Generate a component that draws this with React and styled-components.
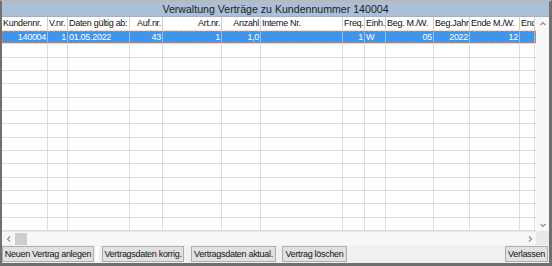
import React from "react";
import styled, { createGlobalStyle } from "styled-components";

const Global = createGlobalStyle`
  html, body { margin: 0; padding: 0; background: #f0f0f0; }
  body { font-family: "Liberation Sans", Arial, sans-serif; }
  * { box-sizing: border-box; }
`;

const COLS = [
  { key: "kd", title: "Kundennr.", w: 46, ah: "left", ad: "right" },
  { key: "vnr", title: "V.nr.", w: 20, ah: "left", ad: "right" },
  { key: "dat", title: "Daten gültig ab:", w: 62, ah: "left", ad: "left" },
  { key: "auf", title: "Auf.nr.", w: 33, ah: "right", ad: "right" },
  { key: "art", title: "Art.nr.", w: 59, ah: "right", ad: "right" },
  { key: "anz", title: "Anzahl", w: 39, ah: "right", ad: "right" },
  { key: "int", title: "Interne Nr.", w: 82, ah: "left", ad: "left" },
  { key: "frq", title: "Freq.", w: 22, ah: "left", ad: "right" },
  { key: "ein", title: "Einh.", w: 21, ah: "left", ad: "left" },
  { key: "bmw", title: "Beg. M./W.", w: 48, ah: "left", ad: "right" },
  { key: "bj", title: "Beg.Jahr", w: 36, ah: "left", ad: "right" },
  { key: "emw", title: "Ende M./W.", w: 50, ah: "left", ad: "right" },
  { key: "end", title: "Ende Jahr", w: 15, ah: "left", ad: "right" },
];
const TEMPLATE = COLS.map((c) => `${c.w}px`).join(" ");

const DATA = [
  { kd: "140004", vnr: "1", dat: "01.05.2022", auf: "43", art: "1", anz: "1,0", int: "", frq: "1", ein: "W", bmw: "05", bj: "2022", emw: "12", end: "" },
];
const ROWS = 15;

const Window = styled.div`
  width: 552px;
  height: 266px;
  display: flex;
  flex-direction: column;
  border-top: 2px solid #b9b9b9;
  border-left: 2px solid #6f6f6f;
  border-right: 3px solid #6f6f6f;
  border-bottom: 3px solid #6f6f6f;
  background: #f0f0f0;
  overflow: hidden;
`;

const TitleBar = styled.div`
  height: 15px;
  flex: none;
  background: #abbfd8;
  color: #1c1c1c;
  font-size: 10.6px;
  line-height: 15px;
  text-align: center;
  border-bottom: 1px solid #9fb2cb;
`;

const GridArea = styled.div`
  flex: none;
  display: grid;
  grid-template-columns: 1fr 13px;
  grid-template-rows: 214px 14px;
  background: #fff;
`;

const Table = styled.div`
  overflow: hidden;
  display: flex;
  flex-direction: column;
`;

const Row = styled.div`
  display: grid;
  grid-template-columns: ${TEMPLATE};
  height: ${(p) => (p.$header ? "14px" : "calc(40px / 3)")};
  flex: none;
  position: relative;
  background: ${(p) => (p.$selected ? "#3d95ec" : "#fff")};
  color: ${(p) => (p.$selected ? "#fff" : "#111")};
  border-bottom: 1px solid ${(p) => (p.$header ? "#e4e4e4" : "#dcdcdc")};
  font-size: 9px;
  letter-spacing: -0.3px;
`;

const Focus = styled.div`
  position: absolute;
  inset: 0 0 0 0;
  border: 1px dashed #f07a4a;
  pointer-events: none;
`;

const Cell = styled.div`
  overflow: hidden;
  white-space: nowrap;
  text-align: ${(p) => p.$align};
  padding: 0 1px 0 1px;
  line-height: ${(p) => (p.$header ? "13px" : "12px")};
  border-right: 1px solid
    ${(p) => (p.$header ? "#cfcfcf" : p.$selected ? "#8cc0f5" : "#dcdcdc")};
`;

const VScroll = styled.div`
  grid-row: 1;
  grid-column: 2;
  background: #f7f7f7;
  display: flex;
  flex-direction: column;
  justify-content: space-between;
  align-items: center;
`;

const HScroll = styled.div`
  grid-row: 2;
  grid-column: 1;
  background: #f7f7f7;
  display: flex;
  align-items: center;
  border-top: 1px solid #e6e6e6;
`;

const Corner = styled.div`
  grid-row: 2;
  grid-column: 2;
  background: #e9e9e9;
`;

const Arrow = styled.div`
  width: 13px;
  height: 13px;
  display: flex;
  align-items: center;
  justify-content: center;
  flex: none;
`;

const Thumb = styled.div`
  width: 12px;
  height: 12px;
  background: #cdcdcd;
  flex: none;
`;

const Spacer = styled.div`
  flex: 1;
`;

const Chevron = ({ dir }) => {
  const pts = {
    up: "1.5,5 4,2.5 6.5,5",
    down: "1.5,3 4,5.5 6.5,3",
    left: "5,1.5 2.5,4 5,6.5",
    right: "3,1.5 5.5,4 3,6.5",
  }[dir];
  return (
    <svg width="8" height="8" viewBox="0 0 8 8">
      <polyline points={pts} fill="none" stroke="#8a8a8a" strokeWidth="1.1" />
    </svg>
  );
};

const ButtonBar = styled.div`
  flex: 1;
  display: flex;
  align-items: center;
  background: #f0f0f0;
  padding: 0 1px 1px 0;
`;

const Button = styled.button`
  height: 16px;
  padding: 0;
  margin-left: ${(p) => p.$gap || 0}px;
  width: ${(p) => p.$w}px;
  background: #e1e1e1;
  border: 1px solid #adadad;
  font-family: "Liberation Sans", Arial, sans-serif;
  font-size: 9px;
  letter-spacing: -0.3px;
  color: #111;
  white-space: nowrap;
  overflow: hidden;
  flex: none;
`;

const Divider = styled.div`
  width: 4px;
  height: 16px;
  margin-left: 1px;
  background: #fdfdfd;
  flex: none;
`;

export default function App() {
  const rows = Array.from({ length: ROWS }, (_, i) => DATA[i] || null);
  return (
    <>
      <Global />
      <Window>
        <TitleBar>Verwaltung Verträge zu Kundennummer 140004</TitleBar>
        <GridArea>
          <Table>
            <Row $header>
              {COLS.map((c) => (
                <Cell key={c.key} $header $align={c.ah}>
                  {c.title}
                </Cell>
              ))}
            </Row>
            {rows.map((r, i) => (
              <Row key={i} $selected={i === 0}>
                {COLS.map((c) => (
                  <Cell key={c.key} $align={c.ad} $selected={i === 0}>
                    {r ? r[c.key] : ""}
                  </Cell>
                ))}
                {i === 0 && <Focus />}
              </Row>
            ))}
          </Table>
          <VScroll>
            <Arrow>
              <Chevron dir="up" />
            </Arrow>
            <Arrow>
              <Chevron dir="down" />
            </Arrow>
          </VScroll>
          <HScroll>
            <Arrow>
              <Chevron dir="left" />
            </Arrow>
            <Thumb />
            <Spacer />
            <Arrow>
              <Chevron dir="right" />
            </Arrow>
          </HScroll>
          <Corner />
        </GridArea>
        <ButtonBar>
          <Button $w={92}>Neuen Vertrag anlegen</Button>
          <Divider />
          <Button $w={82} $gap={3}>Vertragsdaten korrig.</Button>
          <Button $w={85} $gap={7}>Vertragsdaten aktual.</Button>
          <Button $w={65} $gap={6}>Vertrag löschen</Button>
          <Spacer />
          <Button $w={43}>Verlassen</Button>
        </ButtonBar>
      </Window>
    </>
  );
}
